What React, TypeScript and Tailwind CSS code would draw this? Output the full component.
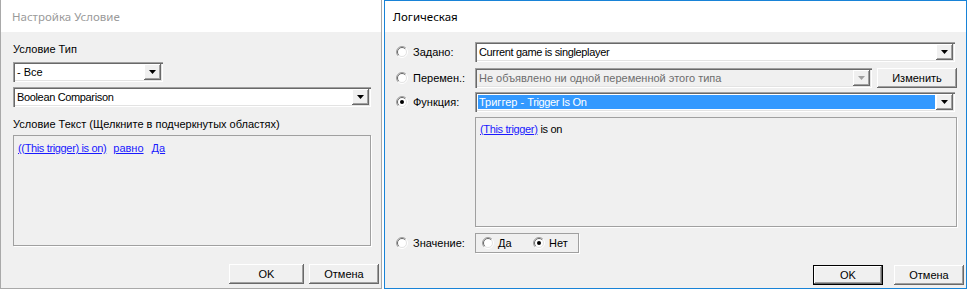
import type { ReactNode } from 'react'

const sunken =
  'shadow-[inset_1px_1px_0_#a0a0a0,inset_2px_2px_0_#696969,inset_-1px_-1px_0_#ffffff,inset_-2px_-2px_0_#e3e3e3]'
const raised =
  'shadow-[inset_-1px_-1px_0_#696969,inset_1px_1px_0_#ffffff,inset_-2px_-2px_0_#a0a0a0]'

// latin glyphs in the original font run narrower than Liberation Sans
function Lat({ children }: { children: ReactNode }) {
  return <span className="tracking-[-0.35px]">{children}</span>
}

function Radio({ checked = false }: { checked?: boolean }) {
  return (
    <svg width="12" height="12" viewBox="0 0 12 12" className="shrink-0">
      <circle cx="6" cy="6" r="5" fill="#ffffff" />
      <path d="M2.1 9.9 A5.5 5.5 0 0 1 9.9 2.1" fill="none" stroke="#a0a0a0" />
      <path d="M9.9 2.1 A5.5 5.5 0 0 1 2.1 9.9" fill="none" stroke="#ffffff" />
      <path d="M2.8 9.2 A4.5 4.5 0 0 1 9.2 2.8" fill="none" stroke="#696969" />
      <path d="M9.2 2.8 A4.5 4.5 0 0 1 2.8 9.2" fill="none" stroke="#e3e3e3" />
      {checked ? <circle cx="6" cy="6" r="2" fill="#000000" /> : null}
    </svg>
  )
}

function DropButton({ disabled = false }: { disabled?: boolean }) {
  return (
    <div className={`my-[2px] mr-[2px] flex w-[17px] items-center justify-center bg-[#f0f0f0] ${raised}`}>
      <svg width="7" height="4" viewBox="0 0 7 4">
        <polygon points="0,0 7,0 3.5,4" fill={disabled ? '#a0a0a0' : '#000000'} />
      </svg>
    </div>
  )
}

function Combo({
  children,
  className = '',
  disabled = false,
  selected = false,
}: {
  children: ReactNode
  className?: string
  disabled?: boolean
  selected?: boolean
}) {
  return (
    <div
      className={`flex h-[20px] shrink-0 ${disabled ? 'bg-[#f0f0f0]' : 'bg-white'} ${sunken} ${className}`}
    >
      <div className="flex min-w-0 flex-1 items-center py-[3px] pl-[3px] pr-[1px]">
        <div
          className={`flex h-full flex-1 items-center truncate whitespace-pre pl-[1px] ${
            selected ? 'bg-[#3399ff] text-white' : disabled ? 'text-[#6d6d6d]' : 'text-black'
          }`}
        >
          {children}
        </div>
      </div>
      <DropButton disabled={disabled} />
    </div>
  )
}

function Button({ children, className = '', focused = false }: { children: ReactNode; className?: string; focused?: boolean }) {
  return (
    <div
      className={`flex h-[20px] shrink-0 items-center justify-center bg-[#f0f0f0] text-black ${
        focused ? 'border border-black' : ''
      } ${className}`}
    >
      <div className={`flex h-full w-full items-center justify-center ${raised}`}>{children}</div>
    </div>
  )
}

function Link({ children }: { children: ReactNode }) {
  return <span className="text-[#1a1aff] underline underline-offset-[1px]">{children}</span>
}

function RadioRow({ label, checked = false, children }: { label: string; checked?: boolean; children: ReactNode }) {
  return (
    <div className="flex h-[20px] items-center">
      <Radio checked={checked} />
      <span className="ml-[5px] w-[62px]">{label}</span>
      {children}
    </div>
  )
}

export default function App() {
  return (
    <div className="flex h-[289px] w-[970px] bg-white font-['Liberation_Sans',Arial,sans-serif] text-[11px] leading-[13px] text-black">
      {/* left dialog */}
      <div className="flex h-[289px] w-[382px] flex-col border-x border-b border-x-[#a9a9a9] border-b-[#a9a9a9] bg-[#f0f0f0]">
        <div className="flex h-[32px] shrink-0 items-center bg-white pl-[11px] font-['Noto_Sans',sans-serif] text-[11.5px] text-[#9a9a9a]">
          Настройка Условие
        </div>
        <div className="flex flex-col pl-[12px]">
          <div className="mt-[11px]">Условие Тип</div>
          <Combo className="mt-[6px] w-[150px]">- Все</Combo>
          <Combo className="mt-[5px] w-[358px]">
            <Lat>Boolean Comparison</Lat>
          </Combo>
          <div className="mt-[11px]">Условие Текст (Щелкните в подчеркнутых областях)</div>
          <div className="mt-[4px] h-[111px] w-[358px] border border-[#a0a0a0] px-[4px] py-[6px] shadow-[1px_1px_0_#ffffff]">
            <Link>
              <Lat>((This trigger) is on)</Lat>
            </Link>
            <span className="ml-[7px]">
              <Link>равно</Link>
            </span>
            <span className="ml-[8px]">
              <Link>Да</Link>
            </span>
          </div>
          <div className="mt-[18px] flex justify-end gap-[5px] pr-[2px]">
            <Button className="w-[75px]">OK</Button>
            <Button className="w-[70px]">Отмена</Button>
          </div>
        </div>
      </div>

      {/* right dialog */}
      <div className="ml-[2px] flex h-[289px] w-[583px] flex-col border border-[#1883d7] bg-[#f0f0f0]">
        <div className="flex h-[31px] shrink-0 items-center bg-white pl-[8px] font-['Noto_Sans',sans-serif] text-[11.5px] text-black">
          Логическая
        </div>
        <div className="flex flex-col pl-[11px]">
          <div className="mt-[10px]">
            <RadioRow label="Задано:">
              <Combo className="w-[480px]">
                <Lat>Current game is singleplayer</Lat>
              </Combo>
            </RadioRow>
          </div>
          <div className="mt-[6px]">
            <RadioRow label="Перемен.:">
              <Combo disabled className="w-[397px]">
                Не объявлено ни одной переменной этого типа
              </Combo>
              <Button className="ml-[5px] w-[80px]">Изменить</Button>
            </RadioRow>
          </div>
          <div className="mt-[4px]">
            <RadioRow label="Функция:" checked>
              <Combo selected className="w-[480px]">
                Триггер - <Lat>Trigger Is On</Lat>
              </Combo>
            </RadioRow>
          </div>
          <div className="ml-[79px] mt-[5px] h-[110px] w-[482px] border border-[#a0a0a0] px-[4px] py-[5px] shadow-[1px_1px_0_#ffffff]">
            <Link>
              <Lat>(This trigger)</Lat>
            </Link>{' '}
            <Lat>is on</Lat>
          </div>
          <div className="mt-[6px]">
            <RadioRow label="Значение:">
              <div className="flex h-[20px] w-[104px] items-center border border-[#a0a0a0] pl-[6px] shadow-[1px_1px_0_#ffffff]">
                <Radio />
                <span className="ml-[4px] w-[35px]">Да</span>
                <Radio checked />
                <span className="ml-[4px]">Нет</span>
              </div>
            </RadioRow>
          </div>
          <div className="mt-[12px] flex justify-end gap-[11px] pr-[2px]">
            <Button focused className="w-[70px]">
              OK
            </Button>
            <Button className="w-[70px]">Отмена</Button>
          </div>
        </div>
      </div>
    </div>
  )
}
